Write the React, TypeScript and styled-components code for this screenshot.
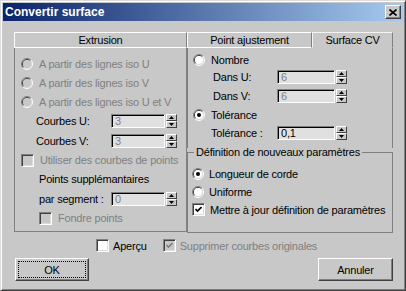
import React from 'react';
import styled, { createGlobalStyle, css } from 'styled-components';

const GlobalStyle = createGlobalStyle`
  html, body {
    margin: 0;
    padding: 0;
    background: #c8c8c8;
  }
  body {
    font-family: "Liberation Sans", Arial, sans-serif;
    font-size: 11px;
    letter-spacing: -0.2px;
    color: #000;
  }
`;

const Window = styled.div`
  box-sizing: border-box;
  width: 406px;
  height: 291px;
  background: #c8c8c8;
  border: 1px solid;
  border-color: #dcdcdc #404040 #404040 #dcdcdc;
  box-shadow: inset 1px 1px 0 #fff, inset -1px -1px 0 #808080;
  padding: 2px;
  display: flex;
  flex-direction: column;
`;

const TitleBar = styled.div`
  height: 18px;
  flex: none;
  display: flex;
  align-items: center;
  justify-content: space-between;
  padding: 0 2px;
  background: linear-gradient(to right, #0a246a, #a6caf0);
`;

const TitleText = styled.span`
  color: #fff;
  font-weight: bold;
  font-size: 12px;
  letter-spacing: 0;
`;

const CloseButton = styled.div`
  box-sizing: border-box;
  width: 16px;
  height: 14px;
  background: #c8c8c8;
  border: 1px solid;
  border-color: #fff #404040 #404040 #fff;
  box-shadow: inset -1px -1px 0 #808080;
  display: flex;
  align-items: center;
  justify-content: center;
`;

const Body = styled.div`
  padding: 11px 10px 0 11px;
  display: flex;
  flex-direction: column;
`;

const Columns = styled.div`
  display: grid;
  grid-template-columns: 173px 206px;
`;

const Column = styled.div`
  display: flex;
  flex-direction: column;
`;

const TabStrip = styled.div`
  display: flex;
  height: 16px;
`;

const Tab = styled.div<{ $w: number; $active?: boolean }>`
  box-sizing: border-box;
  width: ${p => p.$w}px;
  height: 16px;
  border-top: 1px solid #fff;
  border-left: 1px solid #fff;
  border-right: 1px solid #808080;
  border-bottom: 1px solid ${p => (p.$active ? 'transparent' : '#fff')};
  display: flex;
  align-items: center;
  justify-content: center;
  ${p =>
    p.$active &&
    css`
      border-top-color: #f4f4f4;
      border-left-color: #f4f4f4;
    `}
`;

const TabBody = styled.div<{ $h: number; $closed?: boolean }>`
  height: ${p => p.$h}px;
  border-left: 1px solid #808080;
  border-right: 1px solid #808080;
  border-bottom: ${p => (p.$closed ? '1px solid #808080' : 'none')};
  display: flex;
  flex-direction: column;
`;

const Row = styled.div<{ $h: number; $indent?: number; $gap?: number }>`
  height: ${p => p.$h}px;
  flex: none;
  display: flex;
  align-items: center;
  gap: ${p => p.$gap ?? 6}px;
  padding-left: ${p => p.$indent ?? 0}px;
  white-space: nowrap;
`;

const Label = styled.span<{ $w?: number; $dim?: boolean }>`
  ${p => p.$w && `width: ${p.$w}px; flex: none;`}
  color: ${p => (p.$dim ? '#808080' : '#000')};
`;

const RadioIcon = styled.svg`
  flex: none;
  display: block;
`;

const CheckBoxBox = styled.span<{ $dim?: boolean }>`
  box-sizing: border-box;
  width: 13px;
  height: 13px;
  flex: none;
  background: ${p => (p.$dim ? '#c8c8c8' : '#fff')};
  border: 1px solid;
  border-color: #808080 #fff #fff #808080;
  box-shadow: inset 1px 1px 0 #404040, inset -1px -1px 0 #dcdcdc;
  display: flex;
  align-items: center;
  justify-content: center;
`;

const Spin = styled.div`
  display: flex;
  align-items: center;
  gap: 1px;
`;

const SpinBox = styled.div<{ $w: number; $dim?: boolean }>`
  box-sizing: border-box;
  width: ${p => p.$w}px;
  height: 14px;
  background: #e0e0e0;
  border: 1px solid;
  border-color: #808080 #fff #fff #808080;
  box-shadow: inset 1px 1px 0 #000;
  color: ${p => (p.$dim ? '#808080' : '#000')};
  padding-left: 3px;
  line-height: 12px;
`;

const SpinButtons = styled.div`
  display: flex;
  flex-direction: column;
  width: 11px;
  height: 14px;
`;

const SpinButton = styled.div`
  box-sizing: border-box;
  flex: 1;
  background: #c8c8c8;
  border: 1px solid;
  border-color: #fff #404040 #404040 #fff;
  display: flex;
  align-items: center;
  justify-content: center;
`;

const GroupBox = styled.fieldset`
  box-sizing: border-box;
  height: 85px;
  margin: 0;
  padding: 0 0 0 4px;
  border: 1px solid #808080;
  min-inline-size: 0;
  display: flex;
  flex-direction: column;
`;

const Legend = styled.legend`
  line-height: 8px;
  margin-left: 2px;
  padding: 0 2px;
`;

const GroupContent = styled.div`
  padding-top: 9px;
  display: flex;
  flex-direction: column;
`;

const OptionsRow = styled.div`
  display: flex;
  align-items: center;
  height: 13px;
  margin-top: 6px;
  padding-left: 82px;
  gap: 16px;
`;

const CheckItem = styled.div`
  display: flex;
  align-items: center;
  gap: 4px;
`;

const ButtonRow = styled.div`
  display: flex;
  justify-content: space-between;
  margin-top: 6px;
  padding-left: 1px;
`;

const Button = styled.div<{ $w: number; $focus?: boolean }>`
  box-sizing: border-box;
  width: ${p => p.$w}px;
  height: 23px;
  background: #c8c8c8;
  border: 1px solid;
  border-color: #fff #404040 #404040 #fff;
  box-shadow: inset -1px -1px 0 #808080;
  display: flex;
  align-items: center;
  justify-content: center;
  ${p =>
    p.$focus &&
    css`
      outline: 1px dotted #000;
      outline-offset: -4px;
    `}
`;

function Radio({ checked, disabled }: { checked?: boolean; disabled?: boolean }) {
  return (
    <RadioIcon width="12" height="12" viewBox="0 0 12 12">
      <path d="M2.1 9.9 A5.5 5.5 0 0 1 9.9 2.1" stroke="#808080" fill="none" />
      <path d="M9.9 2.1 A5.5 5.5 0 0 1 2.1 9.9" stroke="#fff" fill="none" />
      <path d="M2.8 9.2 A4.5 4.5 0 0 1 9.2 2.8" stroke="#404040" fill="none" />
      <path d="M9.2 2.8 A4.5 4.5 0 0 1 2.8 9.2" stroke="#dcdcdc" fill="none" />
      <circle cx="6" cy="6" r="4" fill={disabled ? '#c8c8c8' : '#fff'} />
      {checked && <circle cx="6" cy="6" r="2" fill={disabled ? '#808080' : '#000'} />}
    </RadioIcon>
  );
}

function CheckBox({ checked, disabled }: { checked?: boolean; disabled?: boolean }) {
  return (
    <CheckBoxBox $dim={disabled}>
      {checked && (
        <svg width="7" height="7" viewBox="0 0 7 7">
          <path d="M0.5 3 L2.5 5 L6.5 1" stroke={disabled ? '#808080' : '#000'} strokeWidth="1.7" fill="none" />
        </svg>
      )}
    </CheckBoxBox>
  );
}

function Arrow({ up }: { up?: boolean }) {
  return (
    <svg width="5" height="3" viewBox="0 0 5 3">
      <path d={up ? 'M0 3 L2.5 0 L5 3 Z' : 'M0 0 L5 0 L2.5 3 Z'} fill="#000" />
    </svg>
  );
}

function SpinField({ value, w, disabled }: { value: string; w: number; disabled?: boolean }) {
  return (
    <Spin>
      <SpinBox $w={w} $dim={disabled}>{value}</SpinBox>
      <SpinButtons>
        <SpinButton><Arrow up /></SpinButton>
        <SpinButton><Arrow /></SpinButton>
      </SpinButtons>
    </Spin>
  );
}

export default function App() {
  return (
    <>
      <GlobalStyle />
      <Window>
        <TitleBar>
          <TitleText>Convertir surface</TitleText>
          <CloseButton>
            <svg width="8" height="7" viewBox="0 0 8 7">
              <path d="M0.5 0.5 L7.5 6.5 M7.5 0.5 L0.5 6.5" stroke="#000" strokeWidth="1.6" />
            </svg>
          </CloseButton>
        </TitleBar>
        <Body>
          <Columns>
            <Column>
              <TabStrip>
                <Tab $w={173}>Extrusion</Tab>
              </TabStrip>
              <TabBody $h={183} $closed>
                <div style={{ height: 6 }} />
                <Row $h={19} $indent={6}>
                  <Radio disabled />
                  <Label $dim>A partir des lignes iso U</Label>
                </Row>
                <Row $h={19} $indent={6}>
                  <Radio disabled />
                  <Label $dim>A partir des lignes iso V</Label>
                </Row>
                <Row $h={19} $indent={6}>
                  <Radio disabled />
                  <Label $dim>A partir des lignes iso U et V</Label>
                </Row>
                <Row $h={20} $indent={21} $gap={0}>
                  <Label $w={75}>Courbes U:</Label>
                  <SpinField value="3" w={54} disabled />
                </Row>
                <Row $h={19} $indent={21} $gap={0}>
                  <Label $w={75}>Courbes V:</Label>
                  <SpinField value="3" w={54} disabled />
                </Row>
                <Row $h={20} $indent={6}>
                  <CheckBox disabled />
                  <Label $dim>Utiliser des courbes de points</Label>
                </Row>
                <Row $h={18} $indent={24}>
                  <Label>Points supplémantaires</Label>
                </Row>
                <Row $h={22} $indent={24} $gap={0}>
                  <Label $w={72}>par segment :</Label>
                  <SpinField value="0" w={54} disabled />
                </Row>
                <Row $h={16} $indent={24}>
                  <CheckBox disabled />
                  <Label $dim>Fondre points</Label>
                </Row>
              </TabBody>
            </Column>
            <Column>
              <TabStrip>
                <Tab $w={125}>Point ajustement</Tab>
                <Tab $w={81} $active>Surface CV</Tab>
              </TabStrip>
              <TabBody $h={100}>
                <div style={{ height: 3 }} />
                <Row $h={17} $indent={5}>
                  <Radio />
                  <Label>Nombre</Label>
                </Row>
                <Row $h={18} $indent={25} $gap={0}>
                  <Label $w={64}>Dans U:</Label>
                  <SpinField value="6" w={58} disabled />
                </Row>
                <Row $h={19} $indent={25} $gap={0}>
                  <Label $w={64}>Dans V:</Label>
                  <SpinField value="6" w={58} disabled />
                </Row>
                <Row $h={19} $indent={5}>
                  <Radio checked />
                  <Label>Tolérance</Label>
                </Row>
                <Row $h={17} $indent={23} $gap={0}>
                  <Label $w={66}>Tolérance :</Label>
                  <SpinField value="0,1" w={58} />
                </Row>
              </TabBody>
              <GroupBox>
                <Legend>Définition de nouveaux paramètres</Legend>
                <GroupContent>
                  <Row $h={18} $gap={5}>
                    <Radio checked />
                    <Label>Longueur de corde</Label>
                  </Row>
                  <Row $h={18} $gap={5}>
                    <Radio />
                    <Label>Uniforme</Label>
                  </Row>
                  <Row $h={17} $gap={5}>
                    <CheckBox checked />
                    <Label>Mettre à jour définition de paramètres</Label>
                  </Row>
                </GroupContent>
              </GroupBox>
            </Column>
          </Columns>
          <OptionsRow>
            <CheckItem>
              <CheckBox />
              <Label>Aperçu</Label>
            </CheckItem>
            <CheckItem>
              <CheckBox checked disabled />
              <Label $dim>Supprimer courbes originales</Label>
            </CheckItem>
          </OptionsRow>
          <ButtonRow>
            <Button $w={74} $focus>OK</Button>
            <Button $w={75}>Annuler</Button>
          </ButtonRow>
        </Body>
      </Window>
    </>
  );
}
